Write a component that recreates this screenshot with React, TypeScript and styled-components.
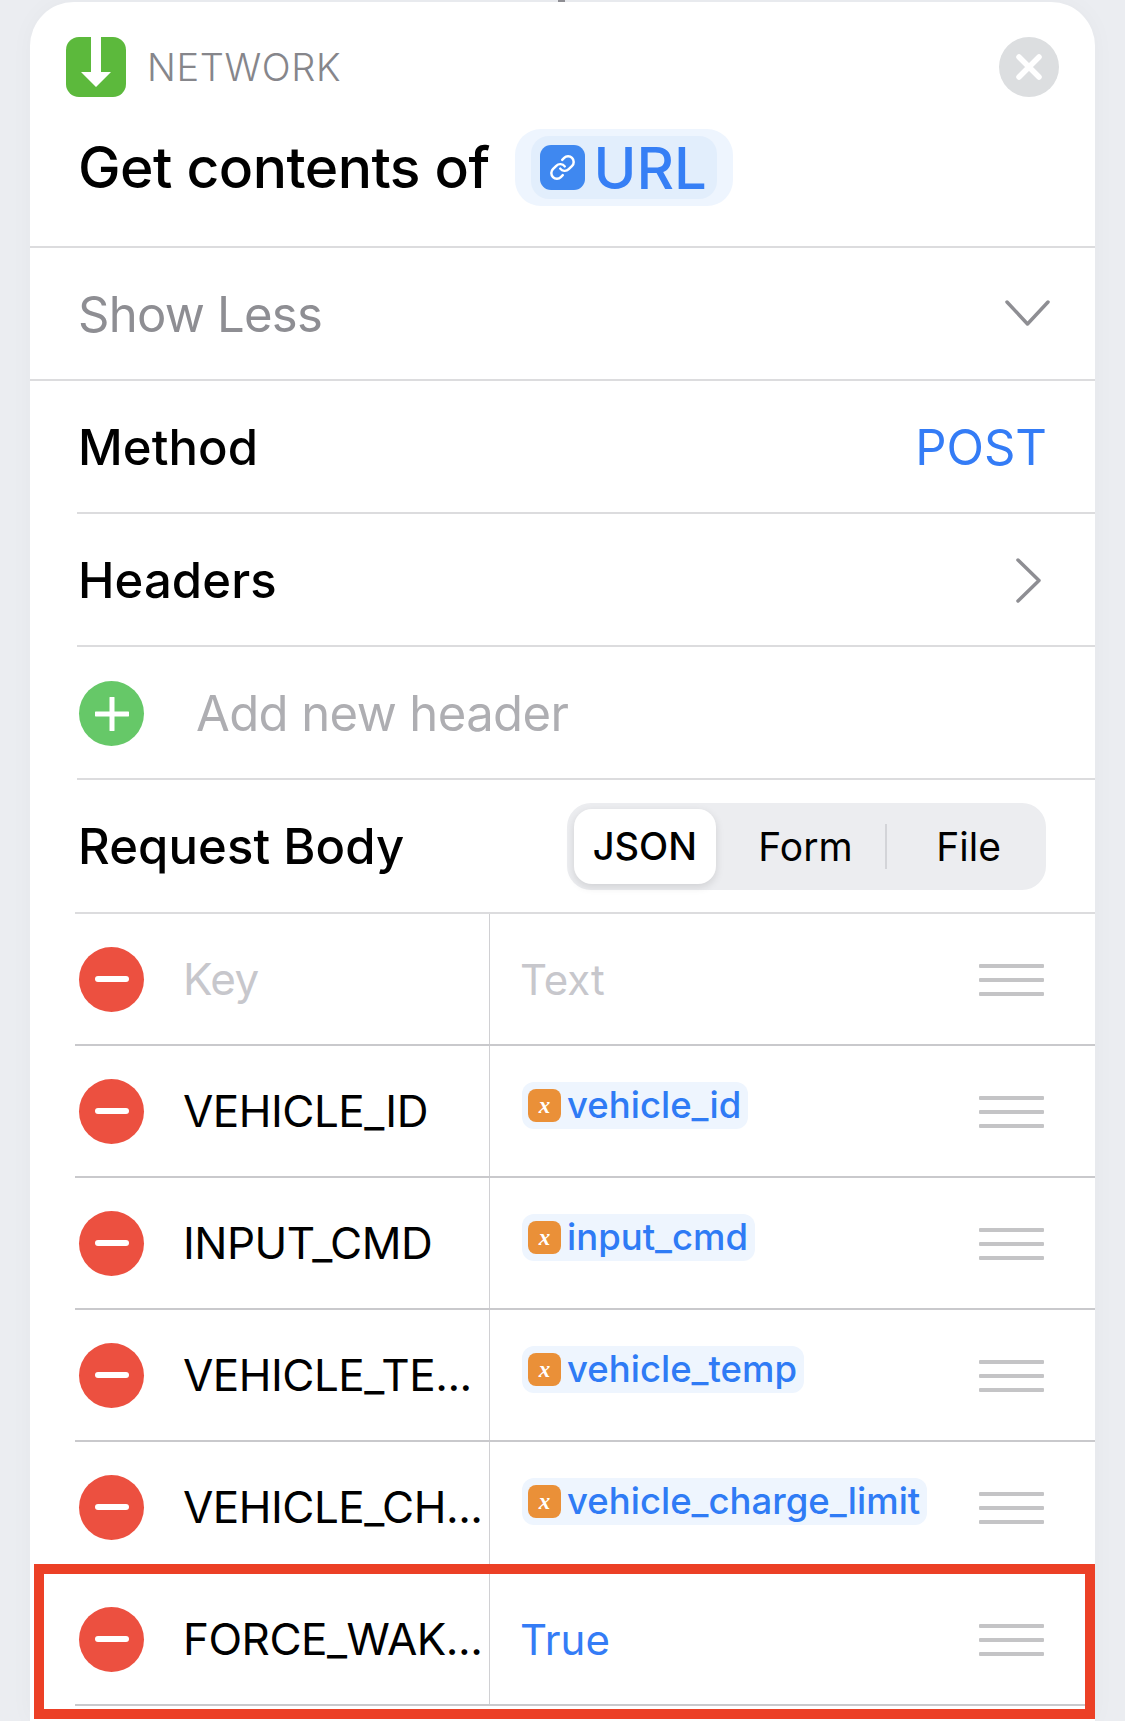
import { Link as LinkIcon } from "lucide-react";
import styled, { createGlobalStyle } from "styled-components";

const GlobalStyle = createGlobalStyle`
  html, body {
    margin: 0;
    padding: 0;
    height: 1721px;
    overflow: hidden;
    background: #ebedf1;
    font-family: Inter, "Liberation Sans", sans-serif;
  }
  * { box-sizing: border-box; }
`;

const Page = styled.div`
  padding: 2px 30px 0;
  height: 1721px;
  overflow: hidden;
`;

const Card = styled.div`
  position: relative;
  width: 1065px;
  height: 1719px;
  background: #fff;
  border-radius: 44px 44px 0 0;
  box-shadow: 0 0 24px rgba(0, 0, 0, 0.03);
`;

const GrabberTip = styled.div`
  position: absolute;
  left: 528px;
  top: -2px;
  width: 7px;
  height: 2px;
  background: #8e8e93;
`;

const Header = styled.div`
  height: 246px;
  padding: 35px 36px 0;
  border-bottom: 2px solid #dcdcde;
`;

const TopLine = styled.div`
  display: flex;
  align-items: center;
  height: 60px;
`;

const AppIcon = styled.div`
  width: 60px;
  height: 60px;
  border-radius: 13px;
  background: #5cb93c;
  overflow: hidden;
  flex: none;
  svg { display: block; }
`;

const Category = styled.span`
  margin-left: 21px;
  font-size: 38px;
  letter-spacing: 0.6px;
  font-weight: 300;
  color: #86868b;
  flex: 1;
`;

const CloseButton = styled.div`
  width: 60px;
  height: 60px;
  border-radius: 50%;
  background: #dcdee0;
  display: flex;
  align-items: center;
  justify-content: center;
`;

const TitleLine = styled.div`
  display: flex;
  align-items: center;
  margin-top: 32px;
  margin-left: 12px;
`;

const Title = styled.span`
  font-size: 57px;
  font-weight: 500;
  letter-spacing: -0.55px;
  color: #000;
`;

const UrlHalo = styled.div`
  margin-left: 25px;
  padding: 7px 16px;
  border-radius: 26px;
  background: #eef5fe;
`;

const UrlChip = styled.div`
  display: flex;
  align-items: center;
  gap: 9px;
  height: 63px;
  padding: 0 10px 0 9px;
  border-radius: 18px;
  background: #e2eefc;
`;

const UrlIcon = styled.div`
  width: 45px;
  height: 45px;
  border-radius: 11px;
  background: #3f88f0;
  display: flex;
  align-items: center;
  justify-content: center;
`;

const UrlText = styled.span`
  font-size: 58px;
  font-weight: 500;
  color: #367ff5;
`;

const Row = styled.div<{ $inset?: number; $plain?: boolean; $height?: number }>`
  display: flex;
  align-items: center;
  height: ${(p) => p.$height ?? 133}px;
  margin-left: ${(p) => p.$inset ?? 0}px;
  padding-left: ${(p) => 48 - (p.$inset ?? 0)}px;
  padding-right: 45px;
  padding-top: ${(p) => (p.$plain ? 0 : 2)}px;
  border-bottom: ${(p) => (p.$plain ? "none" : "2px solid #dcdcde")};
`;

const Label = styled.span<{ $muted?: boolean }>`
  flex: 1;
  font-size: 49px;
  font-weight: ${(p) => (p.$muted ? 400 : 500)};
  letter-spacing: ${(p) => (p.$muted ? "-0.75px" : "0.1px")};
  color: ${(p) => (p.$muted ? "#8e8e93" : "#000")};
`;

const MethodValue = styled.span`
  margin-right: 3px;
  font-size: 49px;
  color: #347cf6;
`;

const AddButton = styled.div`
  width: 65px;
  height: 65px;
  margin-left: 1px;
  border-radius: 50%;
  background: #66c868;
  display: flex;
  align-items: center;
  justify-content: center;
  flex: none;
`;

const AddLabel = styled.span`
  margin-left: 52px;
  font-size: 49px;
  letter-spacing: -0.6px;
  color: #aeaeb2;
`;

const Segments = styled.div`
  display: flex;
  align-items: center;
  width: 479px;
  height: 87px;
  margin-right: 4px;
  padding: 0 7px;
  border-radius: 24px;
  background: #ecedf0;
`;

const Segment = styled.div<{ $active?: boolean; $width: number }>`
  width: ${(p) => p.$width}px;
  height: 75px;
  padding-left: ${(p) => (p.$active ? 0 : 11)}px;
  display: flex;
  align-items: center;
  justify-content: center;
  font-size: ${(p) => (p.$active ? 38 : 39)}px;
  font-weight: ${(p) => (p.$active ? 500 : 400)};
  color: #000;
  border-radius: 18px;
  background: ${(p) => (p.$active ? "#fff" : "transparent")};
  box-shadow: ${(p) => (p.$active ? "0 3px 8px rgba(0, 0, 0, 0.12)" : "none")};
`;

const SegmentGap = styled.div`
  width: 2px;
  height: 45px;
  margin-left: 1px;
  background: #d3d4d8;
  flex: none;
`;

const BodyRow = styled.div<{ $first?: boolean; $last?: boolean }>`
  display: flex;
  height: ${(p) => (p.$last ? 134 : 132)}px;
  margin-left: 45px;
  border-top: 2px solid ${(p) => (p.$first ? "#dcdcde" : "#c9c9cc")};
  border-bottom: ${(p) => (p.$last ? "2px solid #c9c9cc" : "none")};
`;

const KeyCell = styled.div`
  display: flex;
  align-items: center;
  width: 415px;
  padding-left: 4px;
  flex: none;
  border-right: 1px solid #d0d0d3;
`;

const RemoveButton = styled.div`
  width: 65px;
  height: 65px;
  border-radius: 50%;
  background: #ec5040;
  display: flex;
  align-items: center;
  justify-content: center;
  flex: none;
  &::after {
    content: "";
    width: 34px;
    height: 6px;
    border-radius: 3px;
    background: #fff;
  }
`;

const KeyText = styled.span<{ $placeholder?: boolean }>`
  margin-left: 39px;
  font-size: 44px;
  letter-spacing: -0.5px;
  white-space: nowrap;
  color: ${(p) => (p.$placeholder ? "#c7c7cc" : "#000")};
`;

const ValueCell = styled.div`
  flex: 1;
  display: flex;
  align-items: center;
  justify-content: space-between;
  padding: 0 51px 0 30px;
`;

const PlainValue = styled.span<{ $placeholder?: boolean }>`
  font-size: 42px;
  color: ${(p) => (p.$placeholder ? "#c7c7cc" : "#347cf6")};
`;

const VarPill = styled.div`
  display: flex;
  align-items: center;
  gap: 6px;
  height: 47px;
  margin-bottom: 12px;
  margin-left: 2px;
  padding: 0 7px 0 6px;
  border-radius: 12px;
  background: #eef5fe;
`;

const VarIcon = styled.span`
  width: 33px;
  height: 33px;
  border-radius: 8px;
  background: #ea9038;
  display: flex;
  align-items: center;
  justify-content: center;
  color: #fff;
  font-family: "Liberation Serif", serif;
  font-style: italic;
  font-weight: 700;
  font-size: 23px;
  line-height: 1;
`;

const VarName = styled.span`
  font-size: 36.5px;
  font-weight: 500;
  color: #2f7bf5;
  white-space: nowrap;
`;

const DragHandle = styled.div`
  width: 65px;
  margin-top: 2px;
  display: flex;
  flex-direction: column;
  gap: 10px;
  flex: none;
  span {
    height: 4px;
    border-radius: 1px;
    background: #c4c4c6;
  }
`;

const Highlight = styled.div`
  position: absolute;
  left: 4px;
  right: 0;
  top: 1562px;
  height: 155px;
  border: 10px solid #ec4026;
  pointer-events: none;
`;

const ChevronDown = styled.svg`
  margin-top: -2px;
`;

const ChevronRight = styled.svg`
  margin-right: 8px;
`;

type BodyField = {
  name: string;
  variable?: string;
  text?: string;
  placeholder?: boolean;
};

const fields: BodyField[] = [
  { name: "Key", text: "Text", placeholder: true },
  { name: "VEHICLE_ID", variable: "vehicle_id" },
  { name: "INPUT_CMD", variable: "input_cmd" },
  { name: "VEHICLE_TE...", variable: "vehicle_temp" },
  { name: "VEHICLE_CH...", variable: "vehicle_charge_limit" },
  { name: "FORCE_WAK...", text: "True" },
];

function Field({ field, first, last }: { field: BodyField; first: boolean; last: boolean }) {
  return (
    <BodyRow $first={first} $last={last}>
      <KeyCell>
        <RemoveButton />
        <KeyText $placeholder={field.placeholder}>{field.name}</KeyText>
      </KeyCell>
      <ValueCell>
        {field.variable ? (
          <VarPill>
            <VarIcon>x</VarIcon>
            <VarName>{field.variable}</VarName>
          </VarPill>
        ) : (
          <PlainValue $placeholder={field.placeholder}>{field.text}</PlainValue>
        )}
        <DragHandle>
          <span />
          <span />
          <span />
        </DragHandle>
      </ValueCell>
    </BodyRow>
  );
}

export default function App() {
  return (
    <>
      <GlobalStyle />
      <Page>
        <Card>
          <GrabberTip />
          <Header>
            <TopLine>
              <AppIcon>
                <svg width="60" height="60" viewBox="0 0 60 60">
                  <path d="M25 0h10v35h10L30 50 15 35h10z" fill="#fff" />
                </svg>
              </AppIcon>
              <Category>NETWORK</Category>
              <CloseButton>
                <svg width="30" height="30" viewBox="0 0 30 30">
                  <path
                    d="M5 5l20 20M25 5L5 25"
                    stroke="#fff"
                    strokeWidth="5.5"
                    strokeLinecap="round"
                  />
                </svg>
              </CloseButton>
            </TopLine>
            <TitleLine>
              <Title>Get contents of</Title>
              <UrlHalo>
                <UrlChip>
                  <UrlIcon>
                    <LinkIcon size={27} color="#fff" strokeWidth={2.2} />
                  </UrlIcon>
                  <UrlText>URL</UrlText>
                </UrlChip>
              </UrlHalo>
            </TitleLine>
          </Header>

          <Row>
            <Label $muted>Show Less</Label>
            <ChevronDown width="45" height="27" viewBox="0 0 45 27">
              <path
                d="M2 2l20.500 22L43 2"
                fill="none"
                stroke="#8e8e93"
                strokeWidth="3.500"
                strokeLinecap="round"
                strokeLinejoin="round"
              />
            </ChevronDown>
          </Row>
          <Row $inset={47}>
            <Label>Method</Label>
            <MethodValue>POST</MethodValue>
          </Row>
          <Row $inset={47}>
            <Label>Headers</Label>
            <ChevronRight width="27" height="45" viewBox="0 0 27 45">
              <path
                d="M3 2l21 20.500L3 43"
                fill="none"
                stroke="#8e8e93"
                strokeWidth="3.500"
                strokeLinecap="round"
                strokeLinejoin="round"
              />
            </ChevronRight>
          </Row>
          <Row $inset={47}>
            <AddButton>
              <svg width="34" height="34" viewBox="0 0 34 34">
                <path
                  d="M1 17h32M17 1v32"
                  stroke="#fff"
                  strokeWidth="5"
                  strokeLinecap="round"
                />
              </svg>
            </AddButton>
            <AddLabel>Add new header</AddLabel>
          </Row>
          <Row $inset={47} $plain $height={132}>
            <Label>Request Body</Label>
            <Segments>
              <Segment $active $width={142}>
                JSON
              </Segment>
              <Segment $width={169}>Form</Segment>
              <SegmentGap />
              <Segment $width={152}>File</Segment>
            </Segments>
          </Row>

          {fields.map((field, i) => (
            <Field
              key={field.name}
              field={field}
              first={i === 0}
              last={i === fields.length - 1}
            />
          ))}

          <Highlight />
        </Card>
      </Page>
    </>
  );
}
